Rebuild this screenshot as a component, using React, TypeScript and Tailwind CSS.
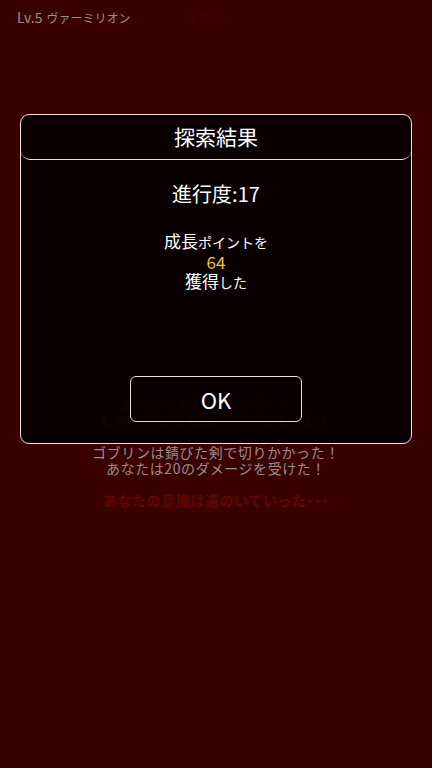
import React from "react";

const logGroups: { lines: string[]; className: string }[] = [
  {
    lines: ["あなたは棘猛獣へ攻撃した！", "しかしその攻撃は外れてしまった！"],
    className: "text-[#9a8c8c]",
  },
  {
    lines: ["ゴブリンは錆びた剣で切りかかった！", "あなたは20のダメージを受けた！"],
    className: "text-[#9a8c8c]",
  },
  {
    lines: ["あなたの意識は遠のいていった･･･"],
    className: "text-[#640505] font-bold",
  },
];

export default function App() {
  return (
    <div
      className="relative w-[432px] h-[768px] overflow-hidden bg-[#3a0000]"
      style={{ fontFamily: '"Noto Sans CJK JP", "Noto Sans", sans-serif' }}
    >
      {/* Status bar */}
      <div className="flex items-end gap-1 px-[17px] pt-[5px] h-[26px]">
        <span className="text-[14px] leading-[18px] text-[#9a8c8c]">Lv.5</span>
        <span className="text-[12px] leading-[17px] text-[#9a8c8c]">ヴァーミリオン</span>
        <span className="ml-[50px] text-[12px] leading-[17px] text-[#420505]">ゴブリン</span>
      </div>

      {/* Battle log */}
      <div className="flex flex-col items-center gap-4 pt-[370px] text-[14px] leading-[16px] tracking-[0.04em]">
        {logGroups.map((g, i) => (
          <div key={i} className={`flex flex-col items-center ${g.className}`}>
            {g.lines.map((l) => (
              <span key={l}>{l}</span>
            ))}
          </div>
        ))}
      </div>

      {/* Result dialog */}
      <div className="absolute left-[20px] top-[114px] w-[392px] h-[330px] rounded-[9px] border border-[#e8e0e0] bg-[#080002]/[0.96] flex flex-col">
        <div className="h-[45px] rounded-[9px] border-b border-[#e8e0e0] flex items-center justify-center">
          <span className="text-[21px] text-white">探索結果</span>
        </div>
        <div className="flex flex-col items-center pt-[20px]">
          <div className="text-[20px] leading-[28px] text-white">進行度:17</div>
          <div className="mt-[23px] flex flex-col items-center text-white">
            <div className="leading-[19px]">
              <span className="text-[17px]">成長</span>
              <span className="text-[14px]">ポイントを</span>
            </div>
            <div className="text-[17px] leading-[19px] text-[#f2c232]">64</div>
            <div className="leading-[19px]">
              <span className="text-[17px]">獲得</span>
              <span className="text-[14px]">した</span>
            </div>
          </div>
        </div>
        <div className="mt-auto mb-[21px] flex justify-center">
          <button className="w-[172px] h-[46px] rounded-[6px] border border-[#e8e0e0] bg-[#080002]/60 text-[22px] text-white flex items-center justify-center">
            OK
          </button>
        </div>
      </div>
    </div>
  );
}
